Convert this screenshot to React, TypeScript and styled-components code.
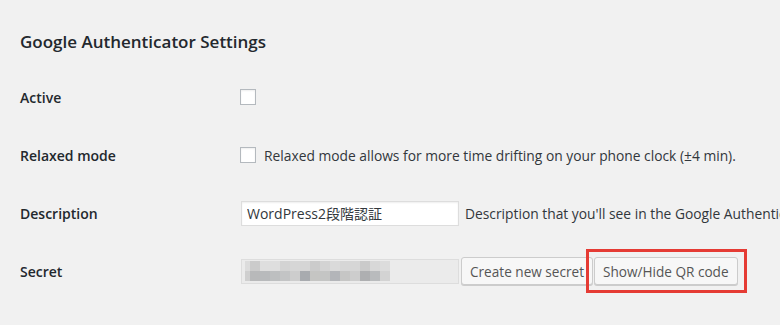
import styled, { createGlobalStyle } from "styled-components";

const GlobalStyle = createGlobalStyle`
  html, body {
    margin: 0;
    padding: 0;
    background: #f1f1f1;
    font-family: "Open Sans", "Noto Sans CJK JP", sans-serif;
    color: #23282d;
    overflow: hidden;
  }
`;

const topRow = ["#dcdcdc", "#cbcbcb", "#dedede", "#dedede", "#d3d3d3", "#d6d6d6", "#d5d5d5", "#cbcbcb", "#d3d3d3", "#dadada", "#d6d6d6", "#d6d6d6", "#cacaca", "#d8d8d8", "#dcdcdc"];
const bottomRow = ["#cfcfcf", "#b8b9ba", "#b8babc", "#bdbfc0", "#c3c4c5", "#cdcdcd", "#a8abaf", "#c5c5c3", "#c4c5c4", "#b3b5b9", "#c6c6c5", "#cdcdcd", "#aeafb1", "#b9bbbd", "#d3d3d3"];

const App = () => {
  return (
    <>
      <GlobalStyle />
      <Page>
        <Title>Google Authenticator Settings</Title>
        <FormTable>
          <Row>
            <Label>Active</Label>
            <Field>
              <Checkbox type="checkbox" />
            </Field>
          </Row>
          <Row>
            <Label>Relaxed mode</Label>
            <Field>
              <Checkbox type="checkbox" />
              <Hint>Relaxed mode allows for more time drifting on your phone clock (±4 min).</Hint>
            </Field>
          </Row>
          <Row>
            <Label>Description</Label>
            <Field>
              <TextInput defaultValue="WordPress2段階認証" />
              <Hint>Description that you'll see in the Google Authenticator app on your phone.</Hint>
            </Field>
          </Row>
          <Row>
            <Label>Secret</Label>
            <Field>
              <SecretBox>
                <Mosaic>
                  <MosaicRow>
                    {topRow.map((c, i) => (
                      <Pixel key={i} $first={i === 0} style={{ background: c }} />
                    ))}
                  </MosaicRow>
                  <MosaicRow>
                    {bottomRow.map((c, i) => (
                      <Pixel key={i} $first={i === 0} style={{ background: c }} />
                    ))}
                  </MosaicRow>
                </Mosaic>
              </SecretBox>
              <Buttons>
                <Button>Create new secret</Button>
                <Highlight>
                  <Button>Show/Hide QR code</Button>
                </Highlight>
              </Buttons>
            </Field>
          </Row>
        </FormTable>
      </Page>
    </>
  );
};

export default App;

const Page = styled.div`
  padding: 26px 0 0 20px;
  width: 780px;
  box-sizing: border-box;
`;

const Title = styled.h2`
  margin: 0;
  font-size: 17px;
  font-weight: 600;
  line-height: 32px;
  white-space: nowrap;
`;

const FormTable = styled.div`
  margin-top: 10px;
  display: flex;
  flex-direction: column;
`;

const Row = styled.div`
  display: grid;
  grid-template-columns: 220px 1fr;
  align-items: center;
  height: 58px;
`;

const Label = styled.div`
  font-size: 14px;
  font-weight: 600;
  white-space: nowrap;
`;

const Field = styled.div`
  display: flex;
  align-items: center;
  gap: 6px;
  white-space: nowrap;
  min-width: 0;
  overflow: hidden;
  padding: 6px 0;
`;

const Checkbox = styled.input`
  appearance: none;
  margin: 0 2px 0 0;
  width: 16px;
  height: 16px;
  border: 1px solid #b4b9be;
  background: #fff;
  box-sizing: border-box;
  box-shadow: inset 0 1px 2px rgba(0, 0, 0, 0.07);
  flex-shrink: 0;
`;

const Hint = styled.span`
  font-size: 13.8px;
  color: #32373c;
`;

const TextInput = styled.input`
  width: 218px;
  height: 25px;
  flex-shrink: 0;
  box-sizing: border-box;
  margin: 0 0 0 1px;
  padding: 0 5px;
  border: 1px solid #ddd;
  background: #fff;
  font-family: "Open Sans", "Noto Sans CJK JP", sans-serif;
  font-size: 14px;
  color: #32373c;
  box-shadow: inset 0 1px 2px rgba(0, 0, 0, 0.07);
  outline: none;
`;

const SecretBox = styled.div`
  width: 218px;
  height: 25px;
  flex-shrink: 0;
  margin-left: 1px;
  box-sizing: border-box;
  border: 1px solid #ddd;
  background: #ebebeb;
  padding: 1px 3px;
  display: flex;
  align-items: center;
`;

const Mosaic = styled.div`
  display: flex;
  flex-direction: column;
`;

const MosaicRow = styled.div`
  display: flex;
  height: 10px;
`;

const Pixel = styled.div<{ $first?: boolean }>`
  width: ${(p) => (p.$first ? "5px" : "10px")};
  height: 100%;
`;

const Buttons = styled.div`
  display: flex;
  align-items: center;
  margin-left: -4px;
`;

const Button = styled.button`
  height: 28px;
  padding: 0 8px;
  border: 1px solid #ccc;
  border-radius: 3px;
  background: #f7f7f7;
  box-shadow: 0 1px 0 #ccc;
  color: #555;
  font-family: "Open Sans", sans-serif;
  font-size: 13.6px;
  white-space: nowrap;
`;

const Highlight = styled.div`
  margin: 0 0 0 -7px;
  padding: 5px 6px 5px 5px;
  border: 3px solid #e53b34;
`;
